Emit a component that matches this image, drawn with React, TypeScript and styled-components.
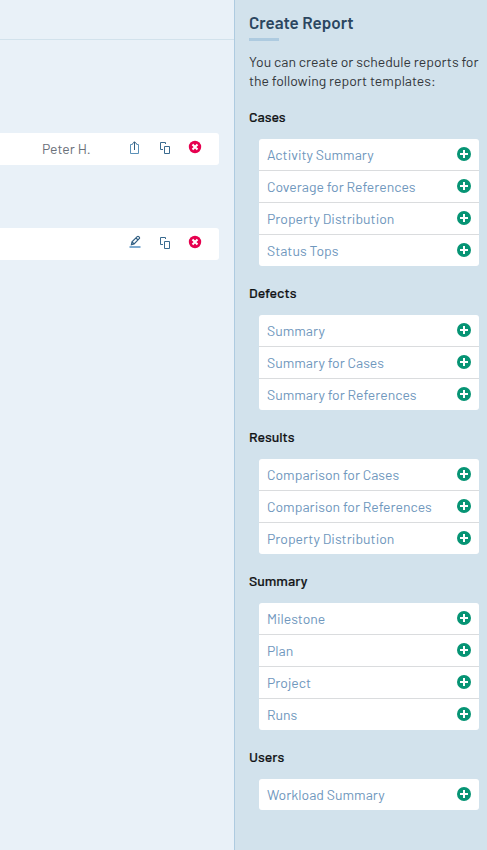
import React from 'react';
import styled, { createGlobalStyle } from 'styled-components';

const GlobalStyle = createGlobalStyle`
  * { box-sizing: border-box; }
  body {
    margin: 0;
    background: #e9f1f8;
    font-family: Barlow, Roboto, sans-serif;
    font-size: 14px;
    color: #33373b;
  }
`;

const Page = styled.div`
  display: flex;
  width: 487px;
  height: 850px;
  overflow: hidden;
`;

const Main = styled.main`
  flex: 1;
  min-width: 0;
`;

const Toolbar = styled.div`
  height: 40px;
  border-bottom: 1px solid #d2e2ec;
`;

const ReportRow = styled.div<{ $top: number }>`
  display: flex;
  align-items: flex-start;
  width: 219px;
  height: 32px;
  margin-top: ${(p) => p.$top}px;
  background: #fff;
  border-radius: 0 3px 3px 0;
`;

const Author = styled.span`
  flex: 1;
  padding-left: 42px;
  line-height: 31px;
  color: #6a7079;
`;

const Actions = styled.div`
  display: flex;
  gap: 14px;
  padding: 6px 16px 0 0;

  svg { display: block; }
`;

const Sidebar = styled.aside`
  width: 253px;
  padding: 12px 8px 0 14px;
  background: #d2e2ec;
  border-left: 1px solid #aecbe0;
`;

const Title = styled.h1`
  width: max-content;
  margin: 0;
  font-size: 17px;
  font-weight: 600;
  line-height: 20px;
  color: #2b4660;

  &::after {
    content: '';
    display: block;
    width: 30px;
    height: 3px;
    margin-top: 6px;
    background: #aecbe0;
  }
`;

const Intro = styled.p`
  margin: 11px 0 0;
  line-height: 19px;
`;

const Group = styled.section`
  padding-top: 18px;
`;

const GroupTitle = styled.h2`
  margin: 0;
  font-size: 14px;
  font-weight: 500;
  line-height: 18px;
  color: #111315;
  -webkit-text-stroke: 0.2px #111315;
`;

const List = styled.ul`
  width: 220px;
  margin: 13px 0 0 10px;
  padding: 0;
  list-style: none;
  background: #fff;
  border-radius: 3px;
`;

const Item = styled.li`
  display: flex;
  justify-content: space-between;
  align-items: flex-start;
  height: 32px;
  padding: 0 8px;
  line-height: 31px;
  color: #6f97bd;
  border-bottom: 1px solid #dadcde;

  &:last-child {
    height: 31px;
    border-bottom: 0;
  }

  svg { display: block; margin-top: 8px; }
`;

const AddIcon = () => (
  <svg width="14" height="14" viewBox="0 0 14 14">
    <circle cx="7" cy="7" r="7" fill="#069474" />
    <path d="M7 3v8M3 7h8" stroke="#fff" strokeWidth="2" />
  </svg>
);

const DeleteIcon = () => (
  <svg width="16" height="16" viewBox="0 0 16 16">
    <circle cx="8" cy="8" r="6.2" fill="#e6004f" />
    <path d="M5.5 5.5l5 5M10.5 5.5l-5 5" stroke="#fff" strokeWidth="2.1" />
  </svg>
);

const CopyIcon = () => (
  <svg width="16" height="16" viewBox="0 0 16 16" fill="none" stroke="#396a8f">
    <path d="M8.5 5V3.5h-5v7H6" />
    <path d="M7.5 7.5h5v7h-5z" />
  </svg>
);

const ShareIcon = () => (
  <svg width="16" height="16" viewBox="0 0 16 16" fill="none">
    <path d="M5.5 5.5h-2v9h8v-9h-2" stroke="#5b91b8" />
    <path d="M7.5 11V3M5.2 5.1l2.3-2.3 2.3 2.3" stroke="#315f83" />
  </svg>
);

const EditIcon = () => (
  <svg width="16" height="16" viewBox="0 0 16 16" fill="none">
    <path
      d="M4.4 10.7l.6-2.8L10.2 2.7c.5-.5 1.1-.5 1.6 0l.4.4c.5.5.5 1.1 0 1.6L7.1 9.9zM9 4l2 2M5.1 8l2 2"
      stroke="#315f83"
      strokeWidth="1.15"
    />
    <path d="M2.5 13h11" stroke="#7fabd0" strokeWidth="2" />
  </svg>
);

const groups = [
  {
    title: 'Cases',
    items: ['Activity Summary', 'Coverage for References', 'Property Distribution', 'Status Tops'],
  },
  { title: 'Defects', items: ['Summary', 'Summary for Cases', 'Summary for References'] },
  {
    title: 'Results',
    items: ['Comparison for Cases', 'Comparison for References', 'Property Distribution'],
  },
  { title: 'Summary', items: ['Milestone', 'Plan', 'Project', 'Runs'] },
  { title: 'Users', items: ['Workload Summary'] },
];

export default function App() {
  return (
    <>
      <GlobalStyle />
      <Page>
        <Main>
          <Toolbar />
          <ReportRow $top={93}>
            <Author>Peter H.</Author>
            <Actions>
              <ShareIcon />
              <CopyIcon />
              <DeleteIcon />
            </Actions>
          </ReportRow>
          <ReportRow $top={63}>
            <Author />
            <Actions>
              <EditIcon />
              <CopyIcon />
              <DeleteIcon />
            </Actions>
          </ReportRow>
        </Main>
        <Sidebar>
          <Title>Create Report</Title>
          <Intro>You can create or schedule reports for the following report templates:</Intro>
          {groups.map(({ title, items }) => (
            <Group key={title}>
              <GroupTitle>{title}</GroupTitle>
              <List>
                {items.map((label) => (
                  <Item key={label}>
                    {label}
                    <AddIcon />
                  </Item>
                ))}
              </List>
            </Group>
          ))}
        </Sidebar>
      </Page>
    </>
  );
}
